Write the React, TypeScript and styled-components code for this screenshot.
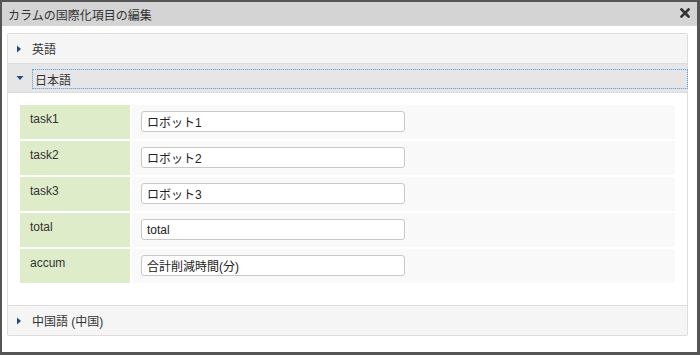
import React from "react";
import styled, { createGlobalStyle } from "styled-components";

const Global = createGlobalStyle`
  html, body { margin: 0; padding: 0; background: #fff; }
  body { font-family: "Liberation Sans", Arial, "Noto Sans CJK JP", sans-serif; font-size: 12px; color: #333; }
`;

const Dialog = styled.div`
  box-sizing: border-box;
  width: 700px;
  height: 355px;
  border: 2px solid #555;
  border-right-width: 3px;
  border-bottom-width: 3px;
  display: flex;
  flex-direction: column;
  background: #fff;
`;

const TitleBar = styled.div`
  height: 24px;
  background: #d4d4d4;
  display: flex;
  align-items: center;
  justify-content: space-between;
  padding: 0 7px 0 6px;
  font-size: 12px;
  color: #333;
`;

const Close = styled.span`
  display: flex;
  align-items: center;
  margin-top: -2px;
`;

const Body = styled.div`
  padding: 7px 9px 0 5px;
`;

const Accordion = styled.div`
  border: 1px solid #ddd;
  border-radius: 2px;
`;

const Header = styled.div<{ $active?: boolean; $first?: boolean; $height: number }>`
  height: ${(p) => p.$height}px;
  box-sizing: border-box;
  display: flex;
  align-items: center;
  padding-left: 8px;
  background: ${(p) => (p.$active ? "#e6e6e6" : "#f5f5f5")};
  border-top: ${(p) => (p.$first ? "none" : "1px solid #dcdcdc")};
  font-size: 12px;
  color: #333;
`;

const Arrow = styled.span`
  width: 16px;
  display: flex;
  align-items: center;
  justify-content: flex-start;
`;

const FocusLabel = styled.span`
  flex: 1;
  height: 18px;
  margin-top: 2px;
  margin-left: 1px;
  display: flex;
  align-items: center;
  padding-left: 2px;
  outline: 1px dotted #6aa8e6;
  outline-offset: 0;
  box-shadow: 0 0 0 1px rgba(120, 170, 230, 0.3);
`;

const Content = styled.div`
  padding: 12px 12px 22px 12px;
  border-top: 1px solid #dcdcdc;
  display: flex;
  flex-direction: column;
  gap: 2px;
`;

const Row = styled.div`
  display: grid;
  grid-template-columns: 110px 1fr;
  gap: 2px;
  height: 34px;
`;

const LabelCell = styled.div`
  background: #dfecca;
  padding: 7px 0 0 10px;
  font-size: 12px;
  color: #333;
`;

const ValueCell = styled.div`
  background: #f9f9f9;
  padding: 6px 0 0 9px;
`;

const Input = styled.div`
  box-sizing: border-box;
  width: 264px;
  height: 21px;
  border: 1px solid #c8c8c8;
  border-radius: 3px;
  background: #fff;
  padding: 0 5px;
  display: flex;
  align-items: center;
  font-size: 12px;
  color: #222;
`;

const RightTri = () => (
  <svg width="6" height="8" viewBox="0 0 6 8">
    <path d="M1 0.5 L5 4 L1 7.5 Z" fill="#1f4f82" />
  </svg>
);

const DownTri = () => (
  <svg width="8" height="6" viewBox="0 0 8 6">
    <path d="M0.5 1 L7.5 1 L4 5 Z" fill="#1f4f82" />
  </svg>
);

const rows = [
  ["task1", "ロボット1"],
  ["task2", "ロボット2"],
  ["task3", "ロボット3"],
  ["total", "total"],
  ["accum", "合計削減時間(分)"],
];

export default function App() {
  return (
    <>
      <Global />
      <Dialog>
        <TitleBar>
          <span>カラムの国際化項目の編集</span>
          <Close>
            <svg width="10" height="10" viewBox="0 0 10 10">
              <path d="M1.5 1.5 L8.5 8.5 M8.5 1.5 L1.5 8.5" stroke="#333" strokeWidth="2.6" strokeLinecap="square" />
            </svg>
          </Close>
        </TitleBar>
        <Body>
          <Accordion>
            <Header $first $height={29}>
              <Arrow><RightTri /></Arrow>
              <span>英語</span>
            </Header>
            <Header $active $height={29}>
              <Arrow><DownTri /></Arrow>
              <FocusLabel>日本語</FocusLabel>
            </Header>
            <Content>
              {rows.map(([k, v]) => (
                <Row key={k}>
                  <LabelCell>{k}</LabelCell>
                  <ValueCell>
                    <Input>{v}</Input>
                  </ValueCell>
                </Row>
              ))}
            </Content>
            <Header $height={30}>
              <Arrow><RightTri /></Arrow>
              <span>中国語 (中国)</span>
            </Header>
          </Accordion>
        </Body>
      </Dialog>
    </>
  );
}
